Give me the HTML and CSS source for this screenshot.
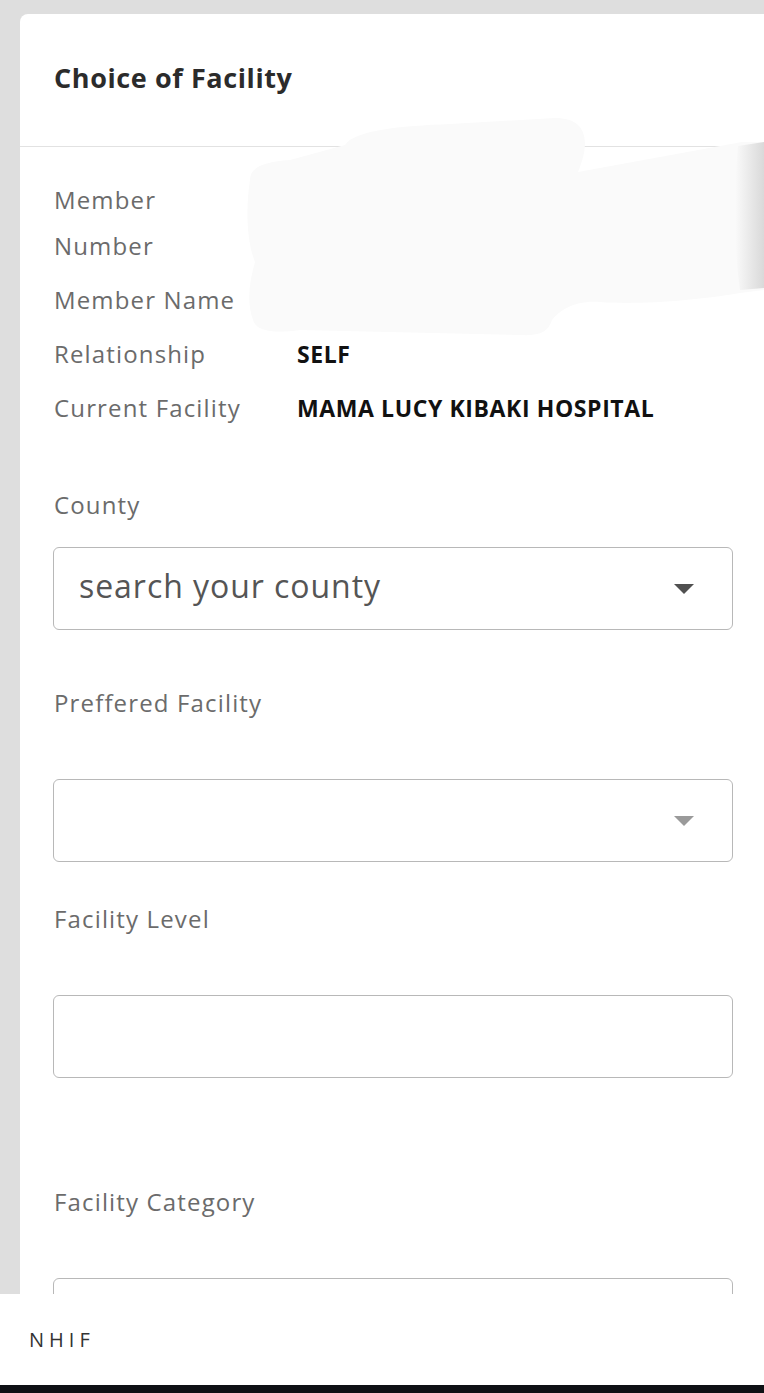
FILE: index.html
```html
<!DOCTYPE html>
<html lang="en">
<head>
<meta charset="utf-8">
<title>Choice of Facility</title>
<link rel="stylesheet" href="styles.css">
</head>
<body>
<div class="screen">
  <div class="viewport">
    <section class="card">
      <header class="card-header">
        <h1 class="card-title">Choice of Facility</h1>
      </header>
      <div class="card-body">
        <dl class="info">
          <dt class="info-label">Member Number</dt>
          <dd class="info-value"></dd>
          <dt class="info-label">Member Name</dt>
          <dd class="info-value"></dd>
          <dt class="info-label">Relationship</dt>
          <dd class="info-value">SELF</dd>
          <dt class="info-label">Current Facility</dt>
          <dd class="info-value">MAMA LUCY KIBAKI HOSPITAL</dd>
        </dl>

        <div class="field field-county">
          <div class="field-label">County</div>
          <div class="select select-tight">
            <span class="placeholder">search your county</span>
            <span class="caret caret-dark"></span>
          </div>
        </div>

        <div class="field field-preferred">
          <div class="field-label">Preffered Facility</div>
          <div class="select">
            <span class="placeholder"></span>
            <span class="caret caret-light"></span>
          </div>
        </div>

        <div class="field field-level">
          <div class="field-label">Facility Level</div>
          <div class="select"></div>
        </div>

        <div class="field field-category">
          <div class="field-label">Facility Category</div>
          <div class="select"></div>
        </div>
      </div>

      <svg class="redact" viewBox="20 14 744 400" width="744" height="400" aria-hidden="true">
        <defs>
          <linearGradient id="edge" x1="0" y1="0" x2="1" y2="0">
            <stop offset="0" stop-color="#fafafa"/>
            <stop offset="1" stop-color="#d9d9d9"/>
          </linearGradient>
        </defs>
        <path fill="#fafafa" d="M250 180 C250 168 262 162 290 160 L345 145 C355 130 400 126 450 124 L555 118 C585 118 592 138 578 172 L742 142 L764 142 L764 290 L740 293 C700 300 640 305 600 302 C575 300 560 310 552 320 C548 332 540 336 520 335 L300 330 C270 334 256 330 253 320 C246 300 250 280 255 262 C246 240 246 205 250 180 Z"/>
        <path fill="url(#edge)" d="M738 146 L764 142 L764 288 L740 290 C734 250 734 190 738 146 Z"/>
      </svg>
    </section>
  </div>
  <footer class="footer">
    <span class="brand">NHIF</span>
  </footer>
  <div class="navbar"></div>
</div>
</body>
</html>
```

FILE: styles.css
```css
* {
  box-sizing: border-box;
}

html, body {
  margin: 0;
  padding: 0;
}

body {
  font-family: "Open Sans", "Noto Sans", "Liberation Sans", sans-serif;
  background: #e0e0e0;
}

.screen {
  width: 764px;
  height: 1393px;
  display: flex;
  flex-direction: column;
  overflow: hidden;
}

.viewport {
  flex: 1;
  min-height: 0;
  overflow: hidden;
  background: #dedede;
  padding: 14px 0 0 20px;
}

.card {
  position: relative;
  background: #ffffff;
  border-top-left-radius: 8px;
  min-height: 1400px;
}

.card-header {
  height: 133px;
  padding: 46px 0 0 34px;
  border-bottom: 1px solid #e2e2e2;
}

.card-title {
  margin: 0;
  font-size: 27px;
  line-height: 36px;
  font-weight: 700;
  color: #2b2b2b;
  letter-spacing: 0.6px;
}

.card-body {
  padding: 30px 31px 0 33px;
}

.info {
  margin: 0;
  padding-left: 1px;
  display: grid;
  grid-template-columns: 196px 1fr;
  column-gap: 47px;
  row-gap: 8px;
}

.info-label {
  margin: 0;
  font-size: 24px;
  line-height: 46px;
  color: #6b6b6b;
  letter-spacing: 1.15px;
}

.info-value {
  margin: 0;
  font-size: 23px;
  line-height: 46px;
  font-weight: 700;
  color: #111111;
  letter-spacing: 0.6px;
  white-space: nowrap;
}

.field-label {
  padding-left: 1px;
  font-size: 24px;
  line-height: 46px;
  color: #6b6b6b;
  letter-spacing: 1.15px;
}

.field-county { margin-top: 51px; }
.field-preferred { margin-top: 50px; }
.field-level { margin-top: 34px; }
.field-category { margin-top: 101px; }

.select {
  margin-top: 53px;
  height: 83px;
  border: 1.5px solid #b8b8b8;
  border-radius: 6px;
  display: flex;
  align-items: center;
  padding: 0 38px 0 25px;
}

.select-tight {
  margin-top: 19px;
}

.placeholder {
  flex: 1;
  margin-bottom: 6px;
  font-size: 32px;
  color: #555555;
  letter-spacing: 0.95px;
}

.caret {
  width: 0;
  height: 0;
  border-left: 10px solid transparent;
  border-right: 10px solid transparent;
  border-top: 10px solid #555555;
}

.caret-dark { border-top-color: #505050; }
.caret-light { border-top-color: #9a9a9a; }

.redact {
  position: absolute;
  left: 0;
  top: 0;
  pointer-events: none;
}

.footer {
  height: 91px;
  background: #ffffff;
  display: flex;
  align-items: center;
  padding-left: 29px;
}

.brand {
  font-size: 20px;
  letter-spacing: 5px;
  color: #333333;
}

.navbar {
  height: 8px;
  background: #0e1014;
}
```
